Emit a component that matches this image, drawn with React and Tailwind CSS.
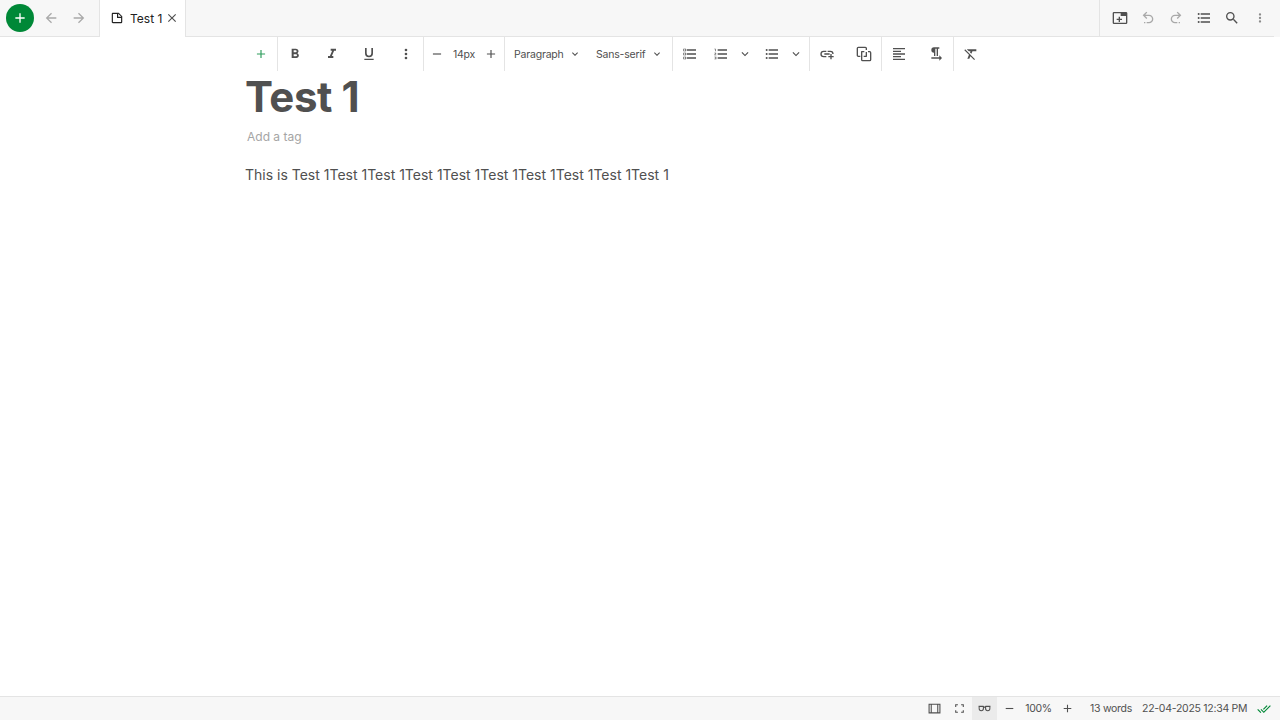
import React from "react";

const P = {
  plus: "M19,13H13V19H11V13H5V11H11V5H13V11H19V13Z",
  minus: "M19,13H5V11H19V13Z",
  left: "M20,11V13H8L13.5,18.5L12.08,19.92L4.16,12L12.08,4.08L13.5,5.5L8,11H20Z",
  right: "M4,11V13H16L10.5,18.5L11.92,19.92L19.84,12L11.92,4.08L10.5,5.5L16,11H4Z",
  note: "M14,10H19.5L14,4.5V10M5,3H15L21,9V19A2,2 0 0,1 19,21H5C3.89,21 3,20.1 3,19V5C3,3.89 3.89,3 5,3M5,5V19H19V12H12V5H5Z",
  close: "M19,6.41L17.59,5L12,10.59L6.41,5L5,6.41L10.59,12L5,17.59L6.41,19L12,13.41L17.59,19L19,17.59L13.41,12L19,6.41Z",
  newTab: "M3,3A2,2 0 0,0 1,5V19A2,2 0 0,0 3,21H21A2,2 0 0,0 23,19V5A2,2 0 0,0 21,3H3M3,5H13V9H21V19H3V5M10,10V13H7V15H10V18H12V15H15V13H12V10H10Z",
  undo: "M13.5,7A6.5,6.5 0 0,1 20,13.5A6.5,6.5 0 0,1 13.5,20H10V18H13.5C16,18 18,16 18,13.5C18,11 16,9 13.5,9H7.83L10.91,12.09L9.5,13.5L4,8L9.5,2.5L10.92,3.91L7.83,7H13.5M6,18H8V20H6V18Z",
  redo: "M10.5,7A6.5,6.5 0 0,0 4,13.5A6.5,6.5 0 0,0 10.5,20H14V18H10.5C8,18 6,16 6,13.5C6,11 8,9 10.5,9H16.17L13.09,12.09L14.5,13.5L20,8L14.5,2.5L13.08,3.91L16.17,7H10.5M18,18H16V20H18V18Z",
  toc: "M7,5H21V7H7V5M7,13V11H21V13H7M4,4.5A1.5,1.5 0 0,1 5.5,6A1.5,1.5 0 0,1 4,7.5A1.5,1.5 0 0,1 2.5,6A1.5,1.5 0 0,1 4,4.5M4,10.5A1.5,1.5 0 0,1 5.5,12A1.5,1.5 0 0,1 4,13.5A1.5,1.5 0 0,1 2.5,12A1.5,1.5 0 0,1 4,10.5M7,19V17H21V19H7M4,16.5A1.5,1.5 0 0,1 5.5,18A1.5,1.5 0 0,1 4,19.5A1.5,1.5 0 0,1 2.5,18A1.5,1.5 0 0,1 4,16.5Z",
  search: "M9.5,3A6.5,6.5 0 0,1 16,9.5C16,11.11 15.41,12.59 14.44,13.73L14.71,14H15.5L20.5,19L19,20.5L14,15.5V14.71L13.73,14.44C12.59,15.41 11.11,16 9.5,16A6.5,6.5 0 0,1 3,9.5A6.5,6.5 0 0,1 9.5,3M9.5,5C7,5 5,7 5,9.5C5,12 7,14 9.5,14C12,14 14,12 14,9.5C14,7 12,5 9.5,5Z",
  dots: "M12,16A2,2 0 0,1 14,18A2,2 0 0,1 12,20A2,2 0 0,1 10,18A2,2 0 0,1 12,16M12,10A2,2 0 0,1 14,12A2,2 0 0,1 12,14A2,2 0 0,1 10,12A2,2 0 0,1 12,10M12,4A2,2 0 0,1 14,6A2,2 0 0,1 12,8A2,2 0 0,1 10,6A2,2 0 0,1 12,4Z",
  bold: "M13.5,15.5H10V12.5H13.5A1.5,1.5 0 0,1 15,14A1.5,1.5 0 0,1 13.5,15.5M10,6.5H13A1.5,1.5 0 0,1 14.5,8A1.5,1.5 0 0,1 13,9.5H10M15.6,10.79C16.57,10.11 17.25,9 17.25,8C17.25,5.74 15.5,4 13.25,4H7V18H14.04C16.14,18 17.75,16.3 17.75,14.21C17.75,12.69 16.89,11.39 15.6,10.79Z",
  italic: "M10,4V7H12.21L8.79,15H6V18H14V15H11.79L15.21,7H18V4H10Z",
  underline: "M5,21H19V19H5V21M12,17A6,6 0 0,0 18,11V3H15.5V11A3.5,3.5 0 0,1 12,14.5A3.5,3.5 0 0,1 8.5,11V3H6V11A6,6 0 0,0 12,17Z",
  chevron: "M7.41,8.58L12,13.17L16.59,8.58L18,10L12,16L6,10L7.41,8.58Z",
  numbered: "M7,13V11H21V13H7M7,19V17H21V19H7M7,7V5H21V7H7M3,8V5H2V4H4V8H3M2,17V16H5V20H2V19H4V18.5H3V17.5H4V17H2M4.25,10A0.75,0.75 0 0,1 5,10.75C5,10.95 4.92,11.14 4.79,11.27L3.12,13H5V14H2V13.08L4,11H2V10H4.25Z",
  checklist: "M7,5H21V7H7V5M7,11H21V13H7V11M7,17H21V19H7V17M2,4H6V8H2V4M3,5V7H5V5H3M2,10H6V14H2V10M3,11V13H5V11H3M2,16H6V20H2V16M3,17V19H5V17H3Z",
  link: "M7,7H11V9H7A3,3 0 0,0 4,12A3,3 0 0,0 7,15H11V17H7A5,5 0 0,1 2,12A5,5 0 0,1 7,7M17,7A5,5 0 0,1 22,12H20A3,3 0 0,0 17,9H13V7H17M8,11H16V13H8V11M17,12H19V15H22V17H19V20H17V17H14V15H17V12Z",
  align: "M3,3H21V5H3V3M3,7H15V9H3V7M3,11H21V13H3V11M3,15H15V17H3V15M3,19H21V21H3V19Z",
  paragraph: "M21,18L17,14V17H5V19H17V22L21,18M9,10V15H11V4H13V15H15V4H17V2H9A4,4 0 0,0 5,6A4,4 0 0,0 9,10Z",
  clear: "M6,5V5.18L8.82,8H11.22L10.5,9.68L12.6,11.78L14.21,8H20V5H6M3.27,5L2,6.27L8.97,13.24L6.5,19H9.5L11.07,15.34L16.73,21L18,19.73L3.55,5.27L3.27,5Z",
  width: "M1,3H23V21H1V3M3,5V19H5V5H3M7,5V19H17V5H7M19,5V19H21V5H19Z",
  full: "M4,4H9V6H6V9H4V4M15,4H20V9H18V6H15V4M18,15H20V20H15V18H18V15M4,15H6V18H9V20H4V15Z",
  glasses: "M1,7H9C10.5,7 11,7.7 11.3,8.5H12.7C13,7.7 13.5,7 15,7H23V9.5H22.8V12A5,5 0 0,1 18,17A5,5 0 0,1 13,12V10.5H11V12A5,5 0 0,1 6,17A5,5 0 0,1 1.2,12V9.5H1V7M3,9V12A3,3 0 0,0 9,12V9H3M15,9V12A3,3 0 0,0 21,12V9H15Z",
  checks: "M0.41,13.41L6,19L7.41,17.58L1.83,12M22.24,5.58L11.66,16.17L7.5,12L6.07,13.41L11.66,19L23.66,7M18,7L16.59,5.58L10.24,11.93L11.66,13.34L18,7Z",
};

const EVEN_ODD = ["width", "glasses", "checklist"];

function Icon({ name, size = 16, className = "" }) {
  return (
    <svg viewBox="0 0 24 24" width={size} height={size} fill="currentColor" fillRule={EVEN_ODD.includes(name) ? "evenodd" : "nonzero"} className={"shrink-0 " + className}>
      <path d={P[name]} />
    </svg>
  );
}

function NoteLinkIcon() {
  return (
    <svg viewBox="0 0 24 24" width={16} height={16} fill="none" stroke="currentColor" strokeWidth="2" strokeLinejoin="round" className="shrink-0">
      <path d="M6.5,15.5H3.5A1.5,1.5 0 0,1 2,14V3.5A1.5,1.5 0 0,1 3.5,2H14A1.5,1.5 0 0,1 15.5,3.5V6" />
      <path d="M11.5,15.5H15.5V9" />
      <path d="M18,8.5H20.5A1.5,1.5 0 0,1 22,10V20.5A1.5,1.5 0 0,1 20.5,22H10A1.5,1.5 0 0,1 8.5,20.5V8.5H12.5" />
    </svg>
  );
}

function Tool({ name, size = 16, className = "w-[37px]" }) {
  return (
    <button className={"flex h-full shrink-0 items-center justify-center " + className}>
      <Icon name={name} size={size} />
    </button>
  );
}

function Group({ className, children }) {
  return <div className={"flex h-full shrink-0 items-center border-r border-[#e4e4e4] " + className}>{children}</div>;
}

export default function App() {
  return (
    <div className="flex h-[720px] w-[1280px] flex-col overflow-hidden bg-white font-['Inter',sans-serif] text-[#505050]">
      <header className="flex h-[37px] shrink-0 bg-[#f7f7f7]">
        <div className="flex w-[99px] shrink-0 items-center border-b border-[#e4e4e4] pl-1.5 text-[#a9a9a9]">
          <button className="flex size-7 items-center justify-center rounded-full bg-[#008837] text-white">
            <Icon name="plus" size={16} />
          </button>
          <Icon name="left" className="ml-[9px]" />
          <Icon name="right" className="ml-3" />
        </div>
        <div className="flex w-[87px] shrink-0 items-center border-x border-[#e4e4e4] bg-white pb-px pl-2.5 text-[#212121]">
          <Icon name="note" size={14} />
          <span className="ml-1.5 w-[33px] shrink-0 pt-px text-[12px] whitespace-nowrap">Test 1</span>
          <Icon name="close" size={14} className="ml-[2px] text-[#505050]" />
        </div>
        <div className="flex-1 border-b border-[#e4e4e4]" />
        <div className="flex w-[175px] shrink-0 items-center border-b border-l border-[#e4e4e4] pl-[6px]">
          <Tool name="newTab" className="w-7" />
          <Tool name="undo" className="w-7 text-[#a9a9a9]" />
          <Tool name="redo" className="w-7 text-[#a9a9a9]" />
          <Tool name="toc" className="w-7" />
          <Tool name="search" className="w-7" />
          <Tool name="dots" size={14} className="w-7 text-[#8c8c8c]" />
        </div>
        <div className="w-1.5 shrink-0" />
      </header>

      <div className="flex h-[34px] shrink-0 pl-[244px] text-[10.5px] tracking-[-0.2px]">
        <Group className="w-[34px]">
          <Tool name="plus" size={14} className="w-[33px] text-[#2f9d5d]" />
        </Group>
        <Group className="w-[146px]">
          <Tool name="bold" className="w-[34px]" />
          <Tool name="italic" className="w-[39px]" />
          <Tool name="underline" className="w-[35px]" />
          <Tool name="dots" className="w-[39px]" />
        </Group>
        <Group className="w-[81px]">
          <Tool name="minus" size={14} className="w-[26px]" />
          <span className="w-[28px] pt-px text-center">14px</span>
          <Tool name="plus" size={14} className="w-[26px]" />
        </Group>
        <Group className="w-[168px] pl-[9px]">
          <span className="w-[54px] pt-px">Paragraph</span>
          <Tool name="chevron" size={12} className="w-[14px]" />
          <span className="ml-[14px] w-[54px] pt-px whitespace-nowrap">Sans-serif</span>
          <Tool name="chevron" size={12} className="w-[14px]" />
        </Group>
        <Group className="w-[137px]">
          <Tool name="checklist" className="w-[34px]" />
          <Tool name="numbered" className="w-[28px]" />
          <Tool name="chevron" size={14} className="w-[20px]" />
          <Tool name="toc" className="ml-[3px] w-[28px]" />
          <Tool name="chevron" size={14} className="w-[20px]" />
        </Group>
        <Group className="w-[72px]">
          <Tool name="link" className="w-[34px]" />
          <button className="flex h-full w-[39px] shrink-0 items-center justify-center">
            <NoteLinkIcon />
          </button>
        </Group>
        <Group className="w-[72px]">
          <Tool name="align" className="w-[34px]" />
          <Tool name="paragraph" className="w-[40px]" />
        </Group>
        <Tool name="clear" className="w-[34px]" />
      </div>

      <main className="flex-1 pl-[245px]">
        <h1 className="h-[52px] text-[42px] leading-[52px] font-bold tracking-[-0.4px]">Test 1</h1>
        <div className="mt-1.5 pl-0.5 text-[12px] leading-4 text-[#a5a5a5]">Add a tag</div>
        <p className="mt-5 text-[14px] leading-5 whitespace-nowrap">This is Test 1Test 1Test 1Test 1Test 1Test 1Test 1Test 1Test 1Test 1</p>
      </main>

      <footer className="flex h-6 shrink-0 items-center justify-end border-t border-[#e4e4e4] bg-[#f7f7f7] pr-[9px] text-[10.5px] tracking-[-0.27px]">
        <Tool name="width" size={13} className="w-[25px]" />
        <Tool name="full" size={13} className="w-[25px]" />
        <Tool name="glasses" size={13} className="w-[25px] bg-[#ebebeb]" />
        <Tool name="minus" size={13} className="w-[25px]" />
        <span className="w-[33px] pt-px text-center">100%</span>
        <Tool name="plus" size={13} className="w-[25px]" />
        <span className="ml-[10px] w-[43px] pt-px whitespace-nowrap">13 words</span>
        <span className="ml-[9px] w-[105px] pt-px whitespace-nowrap">22-04-2025 12:34 PM</span>
        <Icon name="checks" size={14} className="ml-[10px] text-[#008837]" />
      </footer>
    </div>
  );
}
